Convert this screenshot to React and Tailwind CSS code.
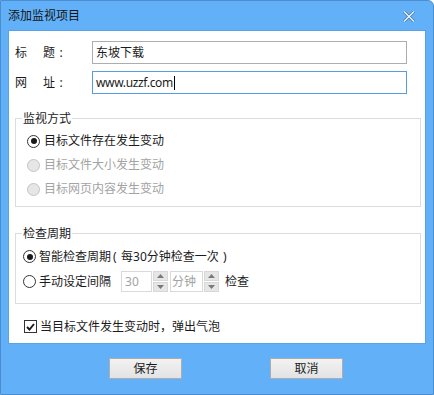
import React from "react";

const FONT = { fontFamily: '"Noto Sans", "Noto Sans CJK SC", sans-serif' };

function Radio({ checked, disabled }) {
  return (
    <span
      className={
        "w-[13px] h-[13px] rounded-full border flex items-center justify-center shrink-0 " +
        (disabled ? "border-[#c4c4c4] bg-[#e6e6e6]" : "border-[#333333] bg-white")
      }
    >
      {checked && <span className="w-[6px] h-[6px] rounded-full bg-[#1a1a1a]" />}
    </span>
  );
}

function Spin() {
  return (
    <div className="flex flex-col gap-[1px] w-[15px] h-[21px]">
      <div className="flex-1 bg-[#e6e6e6] border border-[#d8d8d8] flex items-center justify-center">
        <svg width="7" height="4" viewBox="0 0 7 4">
          <path d="M0 4 L3.5 0 L7 4 Z" fill="#7a7a7a" />
        </svg>
      </div>
      <div className="flex-1 bg-[#e6e6e6] border border-[#d8d8d8] flex items-center justify-center">
        <svg width="7" height="4" viewBox="0 0 7 4">
          <path d="M0 0 L3.5 4 L7 0 Z" fill="#7a7a7a" />
        </svg>
      </div>
    </div>
  );
}

function Label({ a, b }) {
  return (
    <div className="w-[77px] flex items-center leading-none">
      <span className="w-[28px]">{a}</span>
      <span className="w-[12px]">{b}</span>
      <span className="w-[12px] text-center">:</span>
    </div>
  );
}

export default function App() {
  return (
    <div
      className="w-[434px] h-[395px] bg-[#62b0f8] border border-[#4a8dd0] rounded-tr-[6px] flex flex-col text-[12px] text-[#1b1b1b]"
      style={FONT}
    >
      {/* Title bar */}
      <div className="h-[29px] flex items-center pl-[7px] pr-[18px] shrink-0">
        <span className="leading-none text-[12px] text-[#141414] mt-[1px]">添加监视项目</span>
        <div className="ml-auto mt-[1px]">
          <svg width="12" height="11" viewBox="0 0 12 11">
            <path d="M1 0.5 L11 10.5 M11 0.5 L1 10.5" stroke="#3a6ea8" strokeWidth="2.8" />
            <path d="M1 0.5 L11 10.5 M11 0.5 L1 10.5" stroke="#eef5fd" strokeWidth="1.5" />
          </svg>
        </div>
      </div>

      {/* Panel */}
      <div className="ml-[7px] w-[418px] h-[314px] bg-white border border-[#59a2e8] pl-[6px] pt-[10px] flex flex-col shrink-0">
        <div className="flex items-center h-[23px]">
          <Label a="标" b="题" />
          <div className="w-[315px] h-[23px] border border-[#adadad] flex items-center pl-[3px] leading-none">
            东坡下载
          </div>
        </div>
        <div className="flex items-center h-[23px] mt-[7px]">
          <Label a="网" b="址" />
          <div className="w-[315px] h-[23px] border border-[#569de5] flex items-center pl-[3px] leading-none">
            <span className="tracking-[-0.35px]">www.uzzf.com</span>
            <span className="w-px h-[14px] bg-black ml-[1px]" />
          </div>
        </div>

        {/* Group 1 */}
        <div className="relative w-[406px] h-[89px] mt-[24px] border border-[#dcdcdc] pl-[11px] pt-[10px] flex flex-col">
          <span className="absolute left-[6px] -top-[8px] bg-white px-[1px] leading-[16px]">监视方式</span>
          <div className="flex items-center h-[24px] gap-[4px]">
            <Radio checked />
            <span className="leading-none">目标文件存在发生变动</span>
          </div>
          <div className="flex items-center h-[24px] gap-[4px] text-[#a3a3a3]">
            <Radio disabled />
            <span className="leading-none">目标文件大小发生变动</span>
          </div>
          <div className="flex items-center h-[24px] gap-[4px] text-[#a3a3a3]">
            <Radio disabled />
            <span className="leading-none">目标网页内容发生变动</span>
          </div>
        </div>

        {/* Group 2 */}
        <div className="relative w-[406px] h-[71px] mt-[26px] border border-[#dcdcdc] pl-[7px] pt-[11px] flex flex-col">
          <span className="absolute left-[6px] -top-[8px] bg-white px-[1px] leading-[16px]">检查周期</span>
          <div className="flex items-center h-[25px] -mt-[1px]">
            <Radio checked />
            <span className="leading-none ml-[3px]">智能检查周期</span>
            <span className="leading-none w-[10px] pl-[2px]">(</span>
            <span className="leading-none">每30分钟检查一次</span>
            <span className="leading-none w-[12px] text-center">)</span>
          </div>
          <div className="flex items-center h-[25px]">
            <Radio />
            <span className="leading-none ml-[3px]">手动设定间隔</span>
            <div className="ml-[10px] w-[31px] h-[21px] border border-[#d9d9d9] flex items-center pl-[3px] text-[#a3a3a3] leading-none">
              30
            </div>
            <div className="ml-[1px]">
              <Spin />
            </div>
            <div className="ml-[2px] w-[33px] h-[21px] border border-[#d9d9d9] flex items-center pl-[1px] text-[#a3a3a3] leading-none">
              分钟
            </div>
            <div className="ml-[1px]">
              <Spin />
            </div>
            <span className="ml-[6px] leading-none">检查</span>
          </div>
        </div>

        {/* Checkbox */}
        <div className="flex items-center h-[23px] mt-[11px] ml-[9px] gap-[3px]">
          <span className="w-[13px] h-[13px] border border-[#333333] bg-white flex items-center justify-center shrink-0">
            <svg width="9" height="8" viewBox="0 0 9 8">
              <path d="M1 4 L3.5 6.5 L8 1" stroke="#1a1a1a" strokeWidth="1.9" fill="none" />
            </svg>
          </span>
          <span className="leading-none">当目标文件发生变动时，弹出气泡</span>
        </div>
      </div>

      {/* Buttons */}
      <div className="flex mt-[14px] ml-[108px] gap-[88px]">
        <button className="w-[73px] h-[21px] border border-[#adadad] bg-gradient-to-b from-[#f2f2f2] to-[#e3e3e3] flex items-center justify-center leading-none text-[12px] text-[#1b1b1b]">
          保存
        </button>
        <button className="w-[73px] h-[21px] border border-[#adadad] bg-gradient-to-b from-[#f2f2f2] to-[#e3e3e3] flex items-center justify-center leading-none text-[12px] text-[#1b1b1b]">
          取消
        </button>
      </div>
    </div>
  );
}
